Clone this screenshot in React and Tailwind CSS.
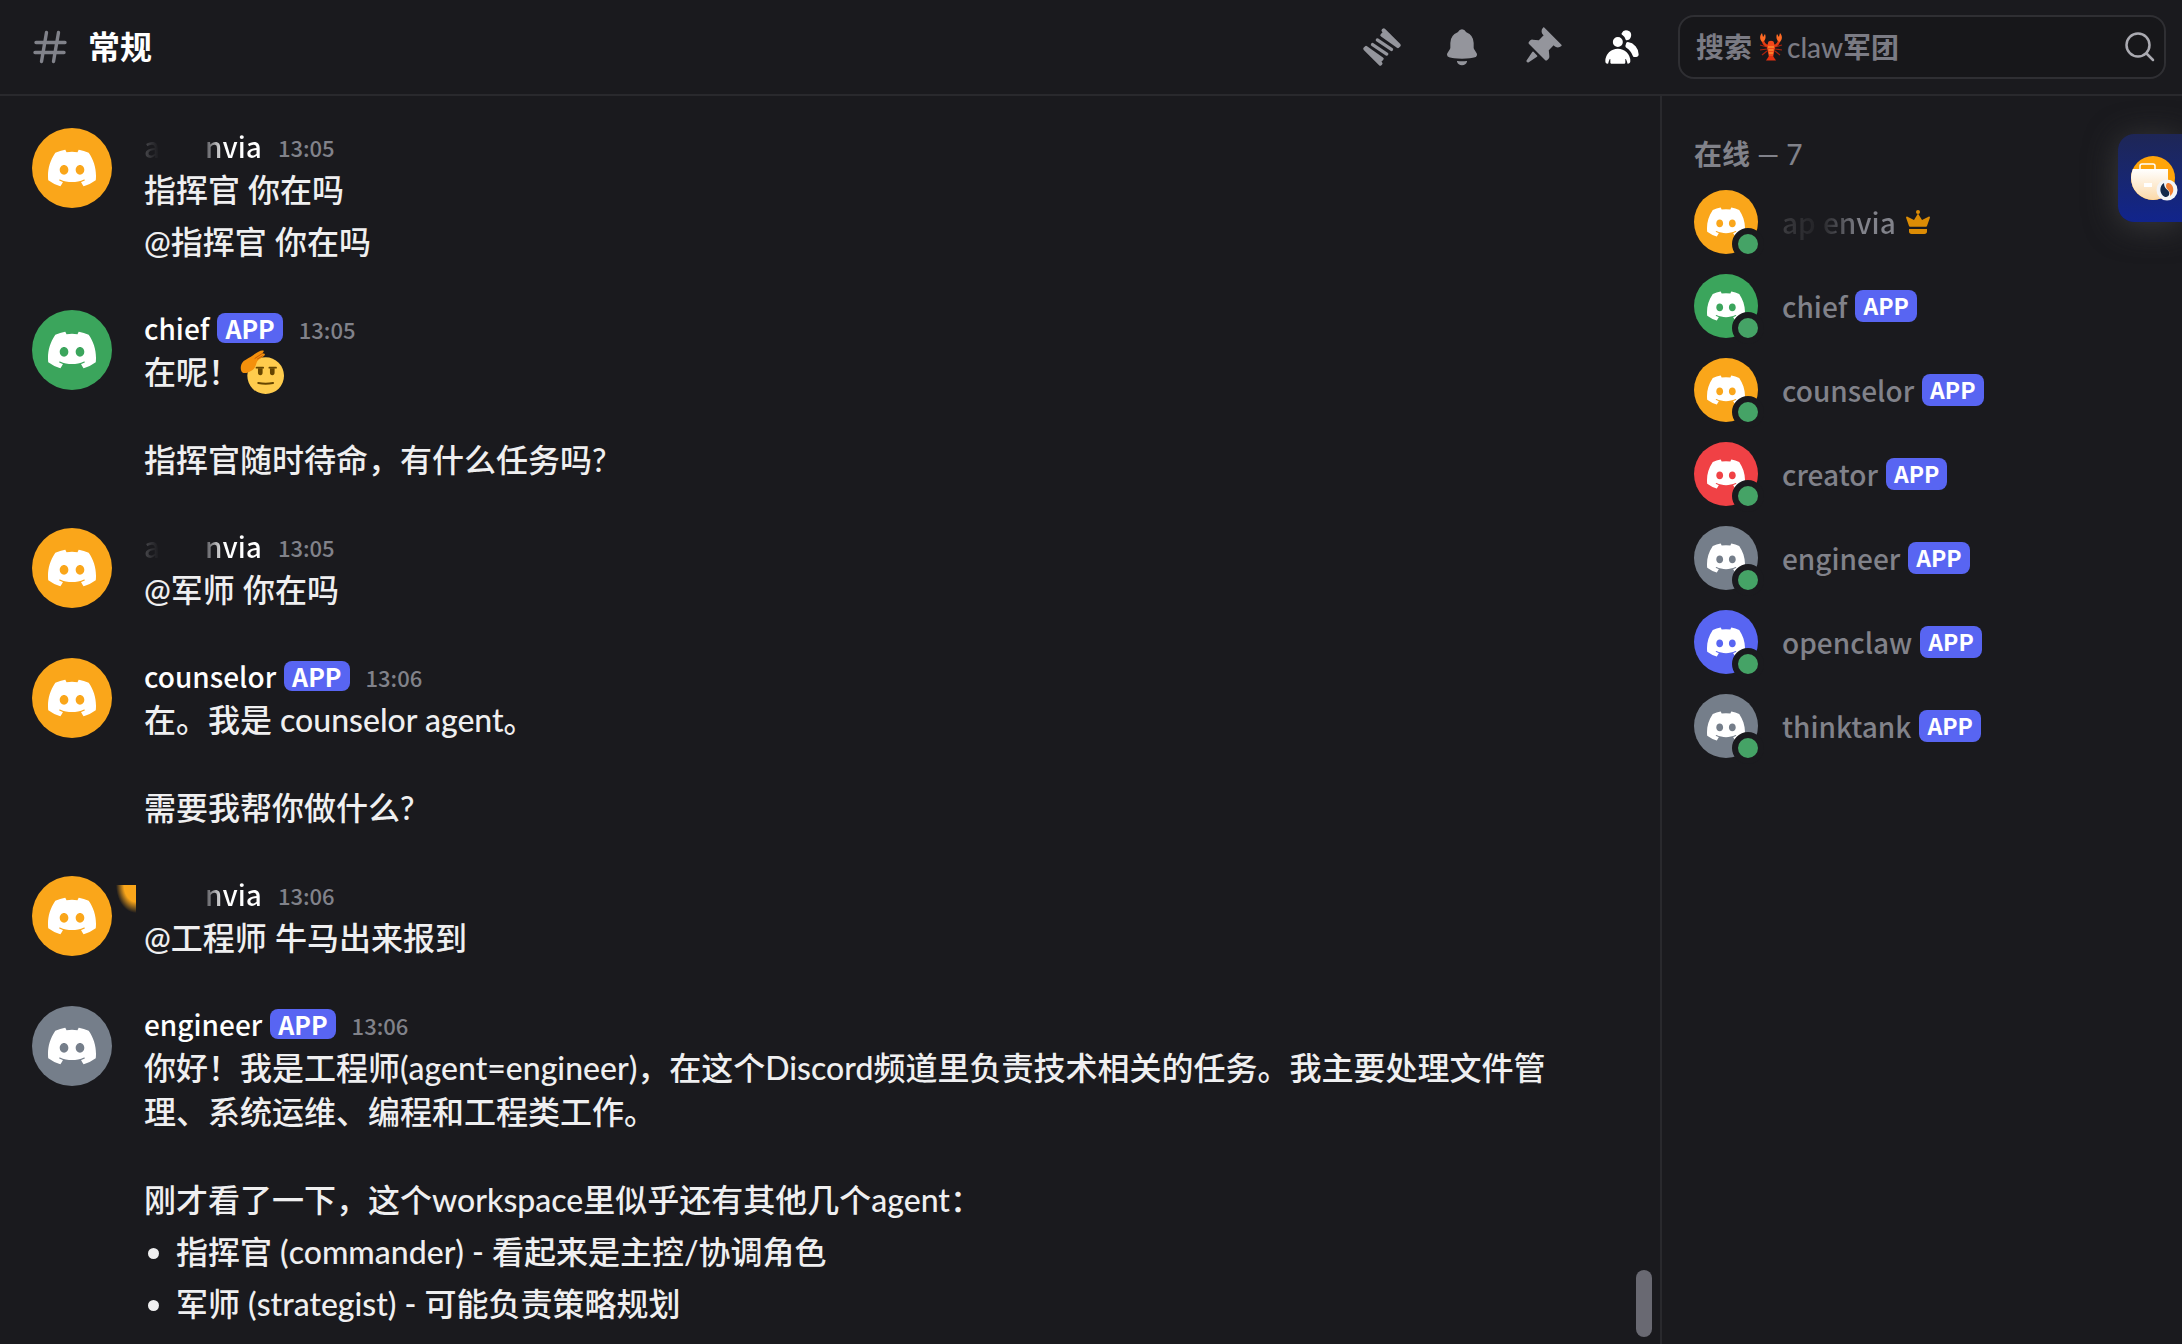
import React from 'react'
import clsx from 'clsx'

const COLORS = {
    orange: 'bg-[#faa61a]',
    green: 'bg-[#3ba55c]',
    red: 'bg-[#f04145]',
    gray: 'bg-[#757e8a]',
    blurple: 'bg-[#5865f2]',
};

const DiscordMark = ({ className }) => (
    <svg className={className} viewBox="0 0 24 24" fill="currentColor" aria-hidden="true">
        <path d="M20.317 4.37a19.79 19.79 0 0 0-4.885-1.515.074.074 0 0 0-.079.037c-.21.375-.444.864-.608 1.25a18.27 18.27 0 0 0-5.487 0 12.64 12.64 0 0 0-.617-1.25.077.077 0 0 0-.079-.037A19.736 19.736 0 0 0 3.677 4.37a.07.07 0 0 0-.032.027C.533 9.046-.32 13.58.099 18.057a.082.082 0 0 0 .031.057 19.9 19.9 0 0 0 5.993 3.03.078.078 0 0 0 .084-.028 14.09 14.09 0 0 0 1.226-1.994.076.076 0 0 0-.041-.106 13.107 13.107 0 0 1-1.872-.892.077.077 0 0 1-.008-.128 10.2 10.2 0 0 0 .372-.292.074.074 0 0 1 .077-.01c3.928 1.793 8.18 1.793 12.062 0a.074.074 0 0 1 .078.01c.12.098.246.198.373.292a.077.077 0 0 1-.006.127 12.299 12.299 0 0 1-1.873.892.077.077 0 0 0-.041.107c.36.698.772 1.362 1.225 1.993a.076.076 0 0 0 .084.028 19.839 19.839 0 0 0 6.002-3.03.077.077 0 0 0 .032-.054c.5-5.177-.838-9.674-3.549-13.66a.061.061 0 0 0-.031-.03zM8.02 15.33c-1.183 0-2.157-1.085-2.157-2.419 0-1.333.956-2.419 2.157-2.419 1.21 0 2.176 1.096 2.157 2.42 0 1.333-.956 2.418-2.157 2.418zm7.975 0c-1.183 0-2.157-1.085-2.157-2.419 0-1.333.955-2.419 2.157-2.419 1.21 0 2.176 1.096 2.157 2.42 0 1.333-.946 2.418-2.157 2.418z" />
    </svg>
);

const HashIcon = () => (
    <svg className="w-9 h-9 text-[#81828a]" viewBox="0 0 36 36" fill="none" stroke="currentColor" strokeWidth="3.400" strokeLinecap="round" aria-hidden="true">
        <path d="M14.500 3.500 9.500 32.500M26.500 3.500l-5 29M4 13.500h29M3 23.500h29" />
    </svg>
);

const ThreadsIcon = () => (
    <svg className="w-10 h-10" viewBox="0 0 24 24" fill="currentColor" aria-hidden="true">
        <path d="M12 2.810a1 1 0 0 1 0-1.410l.360-.360a1 1 0 0 1 1.410 0l9.200 9.200a1 1 0 0 1 0 1.400l-.7.700a1 1 0 0 1-1.300.130l-9.540-6.720a1 1 0 0 1-.080-1.580l1-1L12 2.800ZM12 21.200a1 1 0 0 1 0 1.410l-.350.350a1 1 0 0 1-1.410 0l-9.200-9.190a1 1 0 0 1 0-1.410l.7-.7a1 1 0 0 1 1.300-.120l9.540 6.720a1 1 0 0 1 .070 1.580l-1 1 .350.360ZM15.660 16.800a1 1 0 0 1-1.380.280l-8.490-5.660A1 1 0 1 1 6.900 9.760l8.490 5.650a1 1 0 0 1 .270 1.390ZM17.100 14.250a1 1 0 1 0 1.110-1.660L9.730 6.930a1 1 0 0 0-1.110 1.660l8.490 5.660Z" />
    </svg>
);

const BellIcon = () => (
    <svg className="w-10 h-10" viewBox="0 0 24 24" fill="currentColor" aria-hidden="true">
        <path d="M9.700 2.900a2.500 2.500 0 0 1 4.600 0c.07.13.18.22.3.27A7 7 0 0 1 19 9.600v2.900c0 .33.1.65.3.92l1.400 2.120c.2.300.3.640.3 1 0 .800-.480 1.480-1.250 1.660C18.300 18.550 15.700 19 12 19s-6.300-.45-7.750-.8A1.660 1.660 0 0 1 3 16.540c0-.36.1-.7.300-1l1.400-2.120c.2-.270.3-.590.3-.92V9.600a7 7 0 0 1 4.400-6.430.53.53 0 0 0 .3-.27zM9.200 20.400c-.15-.02-.260.100-.220.240a3.150 3.150 0 0 0 6.040 0c.040-.140-.070-.260-.220-.240a38 38 0 0 1-5.600 0z" />
    </svg>
);

const PinIcon = () => (
    <svg className="w-10 h-10" viewBox="0 0 24 24" fill="currentColor" aria-hidden="true">
        <path d="M19.380 11.380a3 3 0 0 0 4.240 0l.03-.03a.500.500 0 0 0 0-.7L13.350.350a.500.500 0 0 0-.7 0l-.03.030a3 3 0 0 0 0 4.240L13 5l-2.920 2.920-3.650-.340a2 2 0 0 0-1.600.580l-.620.630a1 1 0 0 0 0 1.420l9.580 9.580a1 1 0 0 0 1.420 0l.630-.630a2 2 0 0 0 .580-1.600l-.340-3.640L19 11l.380.380zM9.070 17.070a.500.500 0 0 1-.080.770l-5.150 3.430a.500.500 0 0 1-.630-.060l-.420-.420a.500.500 0 0 1-.060-.630L6.160 15a.500.500 0 0 1 .770-.080l2.140 2.140z" />
    </svg>
);

const MembersIcon = () => (
    <svg className="w-10 h-10" viewBox="0 0 24 24" fill="currentColor" aria-hidden="true">
        <path d="M14.500 8a3 3 0 1 0-2.700-4.300c-.2.400.060.860.440 1.120a5 5 0 0 1 2.140 3.080c.010.060.060.100.120.100zM18.440 17.270c.150.430.540.730 1 .730h1.060c.830 0 1.500-.67 1.500-1.500a7.500 7.500 0 0 0-6.500-7.430c-.550-.080-.990.380-1.100.920-.060.300-.150.600-.260.870-.230.580-.050 1.300.470 1.630a9.530 9.530 0 0 1 3.830 4.780zM12.500 9a3 3 0 1 1-6 0 3 3 0 0 1 6 0zM2 20.500a7.500 7.500 0 0 1 15 0c0 .830-.67 1.500-1.500 1.500a.200.200 0 0 1-.2-.16c-.2-.960-.560-1.870-.880-2.540-.1-.230-.420-.150-.420.100v2.100a.500.500 0 0 1-.5.500h-8a.500.500 0 0 1-.5-.5v-2.100c0-.250-.310-.330-.420-.100-.320.670-.670 1.580-.880 2.540a.200.200 0 0 1-.2.160A1.500 1.500 0 0 1 2 20.500z" />
    </svg>
);

const SearchIcon = () => (
    <svg className="w-8 h-8" viewBox="0 0 32 32" fill="none" stroke="currentColor" strokeWidth="2.500" strokeLinecap="round" aria-hidden="true">
        <circle cx="14" cy="14" r="11.500" />
        <path d="m22.500 22.500 6.500 6.500" />
    </svg>
);

const CrownIcon = () => (
    <svg className="w-6 h-6 text-[#dc8c05]" viewBox="0 0 24 24" fill="currentColor" role="img" aria-label="owner">
        <circle cx="12" cy="2" r="2" />
        <path d="M12 3.500 16 10l6.500-3.300c.8-.4 1.700.2 1.400 1.100L21 16c-.2.500-.500.700-1 .700H4c-.5 0-.8-.2-1-.7L.1 7.800c-.3-.9.600-1.500 1.400-1.100L8 10zM3 19h18v2.500c0 1.400-1 2.500-2.500 2.500h-13C4 24 3 22.900 3 21.500z" />
    </svg>
);

const LobsterIcon = () => (
    <svg className="w-6 h-7" viewBox="0 0 24 28" fill="none" aria-hidden="true">
        <path d="M8 14 1 12M8 16l-7 1M8 18l-5 4M16 14l7-2M16 16l7 1M16 18l5 4" stroke="#a8220e" strokeWidth="1.200" />
        <path d="M9 13C5 12 4 10 4 7M15 13c4-1 5-3 5-6" stroke="#e23a12" strokeWidth="2.400" />
        <path d="M3 9C0 6 1 2 3 0c.5 2 1 3 1 4C5 3 5 2 6 1c1.500 4 0 7-3 8zM21 9c3-3 2-7 0-9-.5 2-1 3-1 4-1-1-1-2-2-3-1.500 4 0 7 3 8z" fill="#ff6a24" />
        <path d="M9 10c0-3 6-3 6 0l1 5-2 9h-4l-2-9z" fill="#f2481b" />
        <path d="M9 14h6M9.500 17h5M10 20h4" stroke="#ffb03a" strokeWidth="1.200" />
        <path d="M10 23l-3 4.500h10L14 23z" fill="#e03010" />
    </svg>
);

const SaluteEmoji = () => (
    <svg className="w-11 h-11" viewBox="0 0 36 36" role="img" aria-label="🫡">
        <circle cx="21" cy="21" r="15" fill="#ffcc4d" />
        <path d="M13.500 14.500h5.500M24 14.500h5.500" stroke="#664500" strokeWidth="1.400" strokeLinecap="round" />
        <path d="M14.700 15h3.800v3.500a1.900 2.200 0 0 1-3.800 0zM24.500 15h3.800v3.500a1.900 2.200 0 0 1-3.800 0z" fill="#664500" />
        <path d="M15 27c4 .8 8 .8 12 0" fill="none" stroke="#664500" strokeWidth="1.800" strokeLinecap="round" />
        <path d="M1 17c-1-3 0-6 2-8 3-2 5-3 8-5 3-2 6-4 8-3.500 1 .5 0 1.500-1 2.500 2-.5 3 .5 2 1.500-2 2-5 3-6 5-1 2-1 5-4 7-3 2-8 4-9 .500z" fill="#f4900c" />
        <path d="M18 3 12 7M19 4.500l-5 3" stroke="#c35a08" strokeWidth=".8" />
    </svg>
);

const Avatar = ({ color, status }) => (
    <div className={clsx('relative shrink-0 rounded-full flex items-center justify-center text-white', COLORS[color], status ? 'w-16 h-16' : 'w-20 h-20')}>
        <DiscordMark className={status ? 'w-[38px] h-[38px]' : 'w-12 h-12'} />
        {status && (
            <span className="absolute -right-[6px] -bottom-[6px] w-8 h-8 rounded-full border-6 border-[#1a1a1e] bg-[#45a366]" />
        )}
    </div>
);

const AppTag = ({ small }) => (
    <span className={clsx(
        'rounded-lg bg-[#5865f2] px-2 leading-[30px] font-bold text-white font-["Noto_Sans_CJK_SC",sans-serif]',
        small ? 'h-8 text-[23px]' : 'h-[30px] text-[25px]'
    )}>
        APP
    </span>
);

// the owner's name is partly wiped out, only the tail stays readable
const HiddenName = ({ smudge }) => (
    <span className="flex text-transparent">
        <span className="w-[61px] bg-linear-to-r from-[#4a4a4e] to-[#1a1a1e] to-25% bg-clip-text">{smudge ? '' : 'a'}</span>
        <span className="bg-linear-to-r from-[#55555a] to-white to-35% bg-clip-text">nvia</span>
    </span>
);

const MESSAGES = [
    { color: 'orange', time: '13:05', body: [<p>指挥官 你在吗</p>, <p className="mt-2">@指挥官 你在吗</p>] },
    {
        name: 'chief', color: 'green', time: '13:05', body: [
            <p className="flex items-center h-11">在呢！<SaluteEmoji /></p>,
            <p className="mt-11">指挥官随时待命，有什么任务吗?</p>,
        ],
    },
    { color: 'orange', time: '13:05', body: [<p>@军师 你在吗</p>] },
    {
        name: 'counselor', color: 'orange', time: '13:06', body: [
            <p>在。我是 counselor agent。</p>,
            <p className="mt-11">需要我帮你做什么?</p>,
        ],
    },
    { color: 'orange', time: '13:06', smudge: true, body: [<p>@工程师 牛马出来报到</p>] },
    {
        name: 'engineer', color: 'gray', time: '13:06', body: [
            <p>你好！我是工程师(agent=engineer)，在这个Discord频道里负责技术相关的任务。我主要处理文件管理、系统运维、编程和工程类工作。</p>,
            <p className="mt-11">刚才看了一下，这个workspace里似乎还有其他几个agent：</p>,
            <ul className="list-disc pl-8 marker:text-[#efeff0]">
                <li className="mt-2">指挥官 (commander) - 看起来是主控/协调角色</li>
                <li className="mt-2">军师 (strategist) - 可能负责策略规划</li>
            </ul>,
        ],
    },
];

const MEMBERS = [
    { color: 'orange' },
    { name: 'chief', color: 'green' },
    { name: 'counselor', color: 'orange' },
    { name: 'creator', color: 'red' },
    { name: 'engineer', color: 'gray' },
    { name: 'openclaw', color: 'blurple' },
    { name: 'thinktank', color: 'gray' },
];

const Message = ({ msg }) => (
    <article className="flex gap-8">
        <div className="relative pt-1">
            <Avatar color={msg.color} />
            {msg.smudge && (
                <span className="absolute left-[84px] top-[13px] w-5 h-7 bg-[radial-gradient(farthest-side_at_top_right,#faa61a_60%,transparent)]" />
            )}
        </div>
        <div className="min-w-0 flex-1 text-[32px] leading-11 font-medium text-[#efeff0]">
            <header className="flex items-center h-11 font-['Noto_Sans_CJK_SC',sans-serif]">
                <h3 className="text-[28px] leading-10 font-medium text-white">{msg.name || <HiddenName smudge={msg.smudge} />}</h3>
                {msg.name && <span className="ml-2 flex"><AppTag /></span>}
                <time className="ml-4 pt-[2px] text-[22px] leading-10 font-medium text-[#81828a]">{msg.time}</time>
            </header>
            {msg.body.map((part, i) => (
                <React.Fragment key={i}>{part}</React.Fragment>
            ))}
        </div>
    </article>
);

const Member = ({ member }) => (
    <li className="flex items-center h-[84px] text-[28px] leading-10 font-medium font-['Noto_Sans_CJK_SC',sans-serif]">
        <Avatar color={member.color} status />
        {member.name ? (
            <>
                <span className="ml-6 text-[#81828a]">{member.name}</span>
                <span className="ml-2 flex"><AppTag small /></span>
            </>
        ) : (
            <>
                <span className="ml-6 flex text-transparent">
                    <span className="w-[41px] bg-linear-to-r from-[#3c3c40] to-[#1f1f23] bg-clip-text">ap</span>
                    <span className="bg-linear-to-r from-[#2a2a2e] to-[#81828a] to-50% bg-clip-text">envia</span>
                </span>
                <span className="ml-[10px]"><CrownIcon /></span>
            </>
        )}
    </li>
);

const SideWidget = () => (
    <button aria-label="open widget" className="absolute right-0 top-[134px] w-16 h-[88px] pl-3 rounded-l-2xl bg-linear-to-b from-[#1e2656] to-[#11248c] shadow-[0_4px_32px_#3a3a3c]">
        <svg className="w-12 h-12" viewBox="0 0 48 48" aria-hidden="true">
            <defs>
                <linearGradient id="bag" x1="0" y1="0" x2="0" y2="1">
                    <stop offset="0" stopColor="#fff" />
                    <stop offset="1" stopColor="#fbd9a8" />
                </linearGradient>
                <clipPath id="disc"><circle cx="23" cy="24" r="22" /></clipPath>
            </defs>
            <circle cx="23" cy="24" r="22" fill="#ffa40a" />
            <g clipPath="url(#disc)">
                <rect x="10" y="10" width="15" height="9" rx="2" fill="none" stroke="#fff" strokeWidth="1.500" />
                <path d="M0 15h38v31H0z" fill="url(#bag)" />
                <path d="M14 29h8v4h-8z" fill="#fff" />
            </g>
            <circle cx="37" cy="36" r="10.500" fill="#f4f4f6" />
            <path d="M34 29c-5 3-5 11 1 14 3 0 5-2 4-5-1-3-5-3-5-9z" fill="#13294b" />
            <path d="M38 29c5 0 8 9 2 13 1-6-4-6-4-10 0-2 1-3 2-3z" fill="#f58233" />
        </svg>
    </button>
);

const App = () => {
    return (
        <div className="relative flex flex-col h-screen overflow-hidden bg-[#1a1a1e] font-['Lato','Noto_Sans_CJK_SC',sans-serif]">
            {/* Channel bar */}
            <header className="flex items-center shrink-0 h-24 pl-8 pr-4 border-b-2 border-[#29292d]">
                <HashIcon />
                <h1 className="ml-5 text-[32px] leading-10 font-bold text-white">常规</h1>
                <nav className="ml-auto flex items-center gap-10 text-[#94959c]">
                    <button aria-label="threads"><ThreadsIcon /></button>
                    <button aria-label="notifications"><BellIcon /></button>
                    <button aria-label="pinned messages"><PinIcon /></button>
                    <button aria-label="members" className="text-white"><MembersIcon /></button>
                </nav>
                <form className="relative ml-9 w-[488px] h-16 flex items-center px-4 rounded-2xl border-2 border-[#2f2f33] bg-[#17171a] text-[28px] leading-9 font-semibold text-[#7b7b84]">
                    <label htmlFor="search" className="flex items-center whitespace-pre">
                        <span>搜索 </span>
                        <LobsterIcon />
                        <span className="ml-1 font-medium">claw</span>
                        <span>军团</span>
                    </label>
                    <input id="search" type="text" className="min-w-0 flex-1 bg-transparent outline-none" />
                    <button type="button" aria-label="search" className="text-[#aaaab1] -mr-2"><SearchIcon /></button>
                </form>
            </header>

            <div className="flex flex-1 min-h-0">
                {/* Messages */}
                <main className="relative flex-1 min-w-0 pl-8 pr-[104px] pt-7 flex flex-col gap-[42px]">
                    {MESSAGES.map((msg, i) => <Message key={i} msg={msg} />)}
                    <div className="absolute right-2 bottom-[7px] w-4 h-[67px] rounded-full bg-[#696972]" />
                </main>

                {/* Members */}
                <aside className="w-[522px] shrink-0 border-l-2 border-[#29292d] pl-8 pt-9">
                    <h2 className="text-[28px] leading-11 font-semibold text-[#81828a]">在线 <span className="font-medium">— 7</span></h2>
                    <ul className="mt-1">
                        {MEMBERS.map((member, i) => <Member key={i} member={member} />)}
                    </ul>
                </aside>
            </div>

            <SideWidget />
        </div>
    );
}

export default App;
